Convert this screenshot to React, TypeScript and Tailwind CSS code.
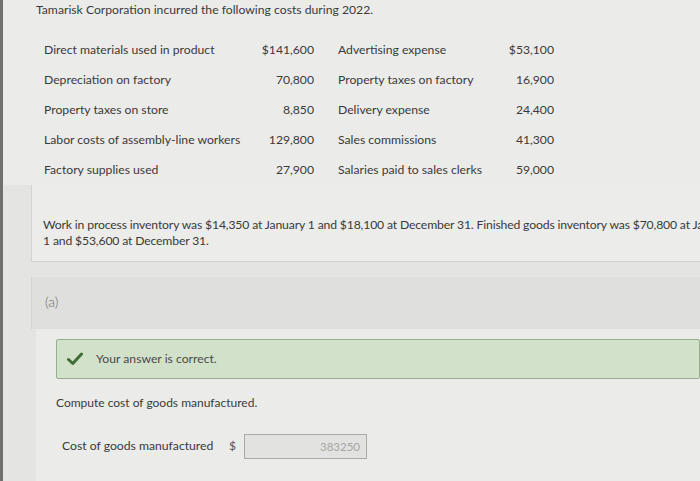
export default function App() {
  const left = [
    ["Direct materials used in product", "$141,600"],
    ["Depreciation on factory", "70,800"],
    ["Property taxes on store", "8,850"],
    ["Labor costs of assembly-line workers", "129,800"],
    ["Factory supplies used", "27,900"],
  ];
  const right = [
    ["Advertising expense", "$53,100"],
    ["Property taxes on factory", "16,900"],
    ["Delivery expense", "24,400"],
    ["Sales commissions", "41,300"],
    ["Salaries paid to sales clerks", "59,000"],
  ];

  return (
    <div className="flex w-[700px] h-[481px] overflow-hidden bg-[#e9e9e7] text-[12.2px] text-[#3a3a3a] font-['Lato','Liberation_Sans',sans-serif]">
      {/* left edge of the screen */}
      <div className="w-[3px] shrink-0 bg-[#707070]" />

      <div className="flex flex-col flex-1 min-w-0">
        {/* Problem statement */}
        <div className="bg-[#ebebe9] pl-[33px] pt-[2px]">
          <p className="leading-[16px] whitespace-nowrap">Tamarisk Corporation incurred the following costs during 2022.</p>
          <div className="flex flex-col pl-[8px] pt-[17px]">
            {left.map((row, i) => (
              <div key={row[0]} className="flex items-center h-[30px] whitespace-nowrap">
                <span className="w-[200px]">{row[0]}</span>
                <span className="w-[70px] text-right">{row[1]}</span>
                <span className="w-[150px] ml-[24px]">{right[i][0]}</span>
                <span className="w-[66px] text-right">{right[i][1]}</span>
              </div>
            ))}
          </div>
        </div>

        <div className="flex flex-1 bg-[#e4e4e2]">
          <div className="w-[28px] shrink-0" />
          <div className="flex flex-col flex-1 min-w-0">
            {/* Inventory note */}
            <div className="h-[77px] bg-[#ececea] border-l border-b border-[#d3d3d1] pl-[11px] pt-[32px] leading-[16px] whitespace-nowrap overflow-hidden tracking-[-0.15px]">
              <p>Work in process inventory was $14,350 at January 1 and $18,100 at December 31. Finished goods inventory was $70,800 at January</p>
              <p>1 and $53,600 at December 31.</p>
            </div>

            {/* Part (a) header */}
            <div className="mt-[15px] h-[52px] bg-[#dfdfdd] border-l border-[#d3d3d1] pl-[13px] pt-[14px]">
              <span className="text-[14px] text-[#6a6a6a] font-light">(a)</span>
            </div>

            {/* Part (a) body */}
            <div className="flex-1 bg-[#ebebe9] ml-[5px] pl-[20px] pt-[10px]">
              <div className="flex items-center h-[40px] bg-[#d2e1ca] border border-[#97ad8d] pl-[10px] rounded-[2px]">
                <svg width="16" height="14" viewBox="0 0 16 14" className="shrink-0">
                  <path d="M1.5 7.5 L5.8 11.5 L14.5 2" fill="none" stroke="#3f6e36" strokeWidth="3" strokeLinecap="round" strokeLinejoin="round" />
                </svg>
                <span className="ml-[13px] text-[#4a4a4a]">Your answer is correct.</span>
              </div>

              <p className="mt-[16px] leading-[16px] text-[12px]">Compute cost of goods manufactured.</p>

              <div className="flex items-center mt-[23px] pl-[6px]">
                <span className="w-[167px] whitespace-nowrap">Cost of goods manufactured</span>
                <span className="w-[15px] text-[#555]">$</span>
                <div className="w-[123px] h-[25px] bg-[#e2e2e0] border border-[#a9a9a7] flex items-center justify-end pr-[6px]">
                  <span className="text-[11.5px] text-[#a6a6a4]">383250</span>
                </div>
              </div>
            </div>
          </div>
        </div>
      </div>
    </div>
  );
}
